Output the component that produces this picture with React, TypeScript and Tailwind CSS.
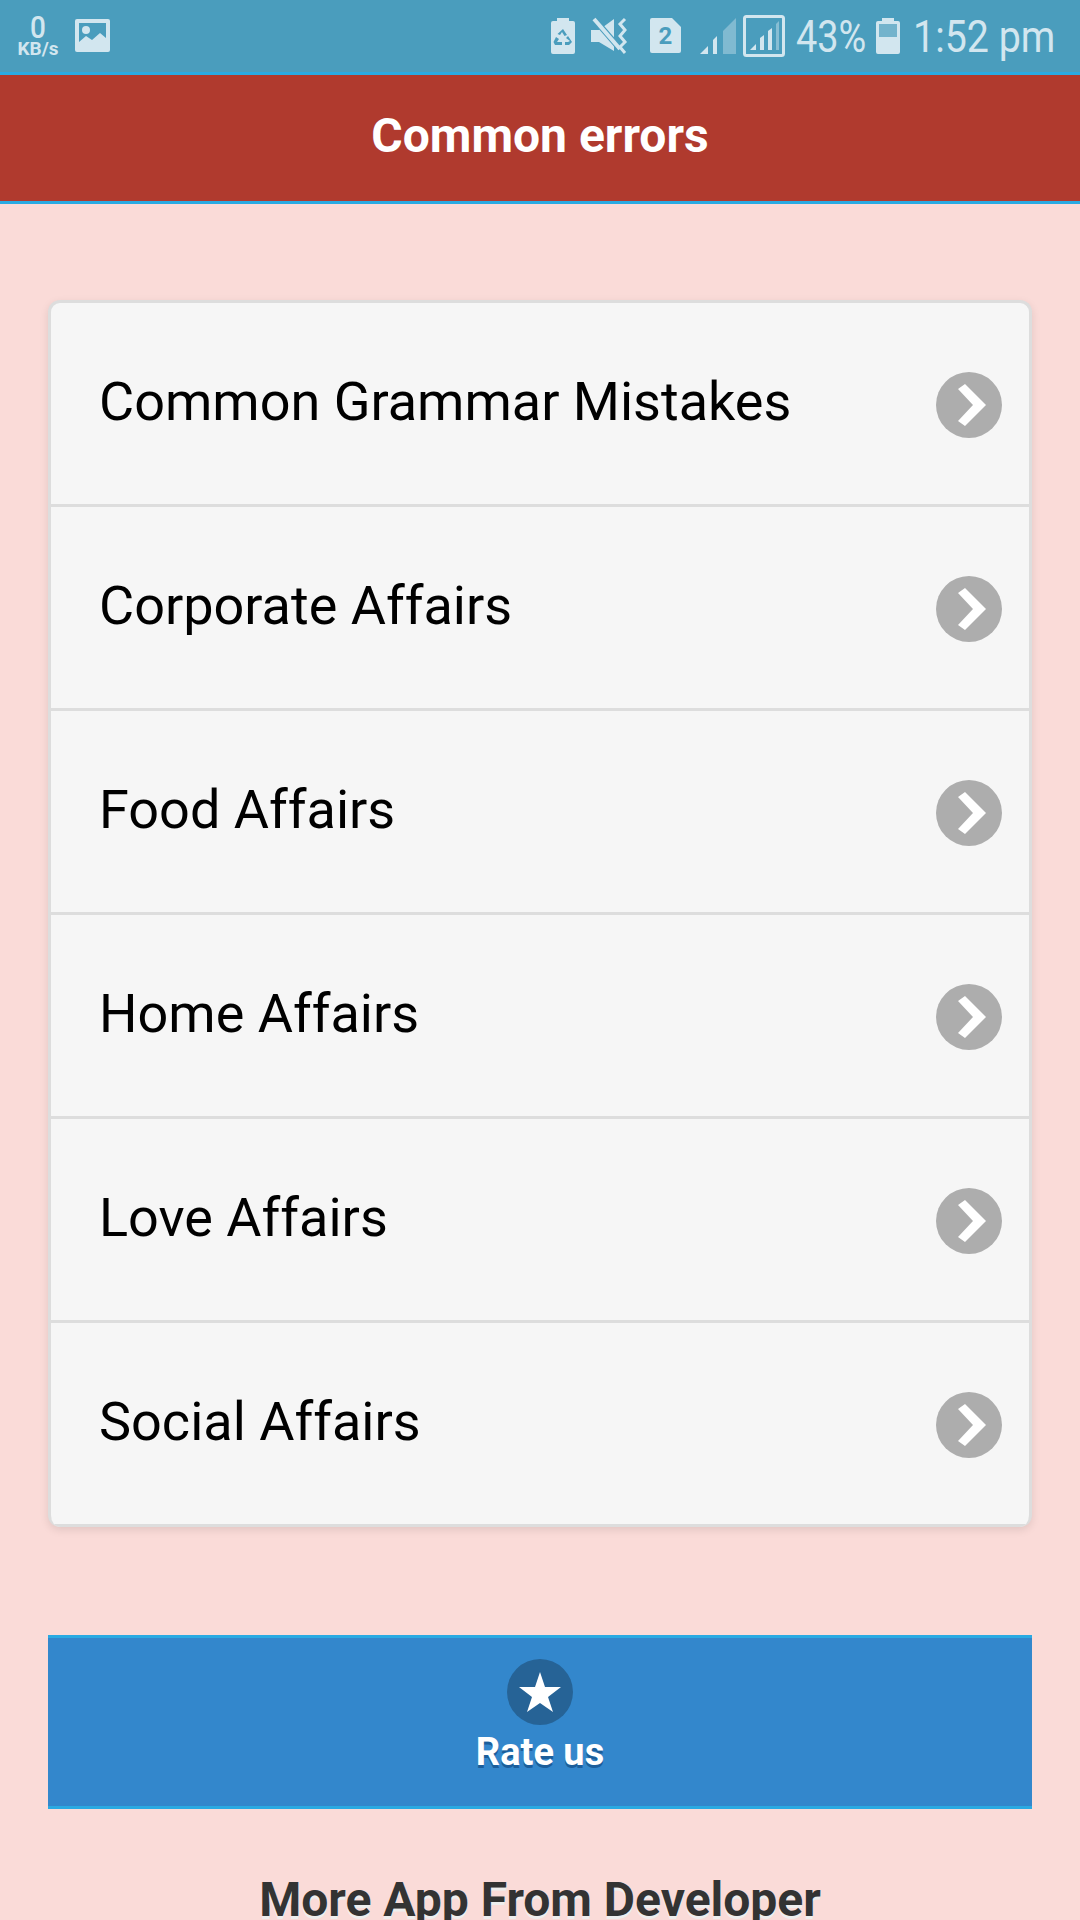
import React from 'react';

const font = { roboto: "font-['Roboto','Liberation_Sans',sans-serif]" };

const items = [
  'Common Grammar Mistakes',
  'Corporate Affairs',
  'Food Affairs',
  'Home Affairs',
  'Love Affairs',
  'Social Affairs',
];

const ICON = '#d2e6ef';
const BAR = '#4a9dbd';

const StatusBar = () => (
  <div className={`h-[72px] bg-[#4a9dbd] flex items-start text-[#d2e6ef] ${font.roboto}`}>
    {/* net speed */}
    <div className="w-[42px] ml-[17px] mt-[14px] flex flex-col items-center">
      <span className="text-[31px] font-medium leading-[27px] scale-x-90">0</span>
      <span className="text-[19px] font-bold leading-[16px] whitespace-nowrap">KB/s</span>
    </div>
    {/* picture */}
    <svg className="ml-[16px] mt-[19px]" width="35" height="34" viewBox="0 0 35 34">
      <rect width="35" height="33" rx="2" fill={ICON} />
      <rect x="4" y="4" width="27" height="25" fill={BAR} />
      <circle cx="11" cy="11" r="4" fill={ICON} />
      <path d="M4 29V23L11 17L17 21L25 14L31 19V29Z" fill={ICON} />
    </svg>
    {/* battery with recycle mark */}
    <svg className="ml-[441px] mt-[18px]" width="24" height="36" viewBox="0 0 24 36">
      <path d="M6 0H18V3H22Q24 3 24 5V34Q24 36 22 36H2Q0 36 0 34V5Q0 3 2 3H6Z" fill={ICON} />
      <path d="M12 11L16 17L13.5 18L11 14L9 17L6.5 16ZM17 18L21 24L18 27H14V24H17L19 23L15 20ZM5 19L8 21L6 24H11V27H4L2.5 24Z" fill={BAR} />
    </svg>
    {/* muted speaker */}
    <svg className="ml-[16px] mt-[17px]" width="40" height="38" viewBox="0 0 40 38">
      <path d="M0 13H8L23 2V34L8 25H0Z" fill={ICON} />
      <path d="M4 3L30 33" stroke={BAR} strokeWidth="6" />
      <path d="M3 2L29 32" stroke={ICON} strokeWidth="4" />
      <path d="M34 2L29 7L34 13L29 19L34 25L29 30L34 36" stroke={ICON} strokeWidth="3" fill="none" />
    </svg>
    {/* sim 2 */}
    <div className="relative ml-[19px] mt-[18px] w-[31px] h-[35px]">
      <svg className="absolute inset-0" width="31" height="35" viewBox="0 0 31 35">
        <path d="M2 0H22L31 9V33Q31 35 29 35H2Q0 35 0 33V2Q0 0 2 0Z" fill={ICON} />
      </svg>
      <span className="absolute inset-0 flex items-center justify-center text-[24px] font-bold leading-none text-[#4a9dbd]">2</span>
    </div>
    {/* signal 1 */}
    <svg className="ml-[19px] mt-[18px]" width="37" height="36" viewBox="0 0 37 36">
      <path d="M0 36L8 28V36Z" fill={ICON} />
      <path d="M13 36V22L17 18V36Z" fill={ICON} />
      <path d="M23 36V13L36 0V36Z" fill={ICON} opacity="0.4" />
    </svg>
    {/* signal 2 in box */}
    <svg className="ml-[6px] mt-[15px]" width="42" height="42" viewBox="0 0 42 42">
      <rect x="1.5" y="1.5" width="39" height="39" rx="2" fill="none" stroke={ICON} strokeWidth="3" />
      <path d="M7 35L13 29V35Z" fill={ICON} />
      <path d="M17 35V23L21 20V35Z" fill={ICON} />
      <path d="M25 35V16L29 13V35Z" fill={ICON} />
      <path d="M33 35V9L36 6V35Z" fill={ICON} opacity="0.45" />
    </svg>
    <span className="ml-[11px] mt-[15px] w-[72px] text-[44px] leading-[44px] whitespace-nowrap origin-left scale-x-[0.86]">43%</span>
    {/* battery */}
    <svg className="ml-[8px] mt-[18px]" width="24" height="36" viewBox="0 0 24 36">
      <path d="M6 0H18V3H22Q24 3 24 5V34Q24 36 22 36H2Q0 36 0 34V5Q0 3 2 3H6Z" fill={ICON} />
      <rect x="3" y="6" width="18" height="13" fill={BAR} opacity="0.7" />
    </svg>
    <span className="ml-[13px] mt-[15px] text-[44px] leading-[44px] whitespace-nowrap origin-left scale-x-[0.895]">1:52 pm</span>
  </div>
);

const Chevron = () => (
  <svg width="66" height="66" viewBox="0 0 66 66" className="shrink-0 mt-[2px]">
    <circle cx="33" cy="33" r="33" fill="#adadad" />
    <path d="M22 17L29 12L50 33L29 54L22 49L37 33Z" fill="#ffffff" />
  </svg>
);

export default function App() {
  return (
    <div className={`w-[1080px] h-[1920px] overflow-hidden bg-[#fadbd8] ${font.roboto}`}>
      <StatusBar />
      <header className="h-[132px] bg-[#b03a2e] border-y-[3px] border-[#2aaae2] flex items-center justify-center">
        <h1 className="text-[48px] font-bold text-white leading-none -mt-[4px]">Common errors</h1>
      </header>

      <main className="px-[48px] pt-[96px]">
        <ul className="bg-[#f6f6f6] border-[3px] border-b-0 border-[#dddddd] rounded-[12px] shadow-[0_3px_8px_rgba(0,0,0,0.1)] overflow-hidden">
          {items.map((item) => (
            <li key={item} className="h-[204px] border-b-[3px] border-[#dddddd] pl-[48px] pr-[27px] flex items-center justify-between">
              <span className="text-[54px] leading-none text-black -mt-[3px]">{item}</span>
              <Chevron />
            </li>
          ))}
        </ul>

        <button className="mt-[108px] w-full h-[174px] bg-[#3387cc] border-y-[3px] border-[#2aaae2] flex flex-col items-center pt-[21px]">
          <span className="w-[66px] h-[66px] rounded-full bg-[#266396] flex items-center justify-center">
            <svg width="42" height="40" viewBox="0 0 42 40">
              <path d="M21 0L26 15H42L29 25L34 40L21 31L8 40L13 25L0 15H16Z" fill="#ffffff" />
            </svg>
          </span>
          <span className="mt-[5px] text-[38px] font-bold leading-[44px] text-white [text-shadow:0_3px_0_#1b5e9b]">Rate us</span>
        </button>

        <h2 className="mt-[65px] text-center text-[48px] font-bold leading-[52px] text-[#333333] [text-shadow:0_3px_0_#eeeeee]">More App From Developer</h2>
      </main>
    </div>
  );
}
